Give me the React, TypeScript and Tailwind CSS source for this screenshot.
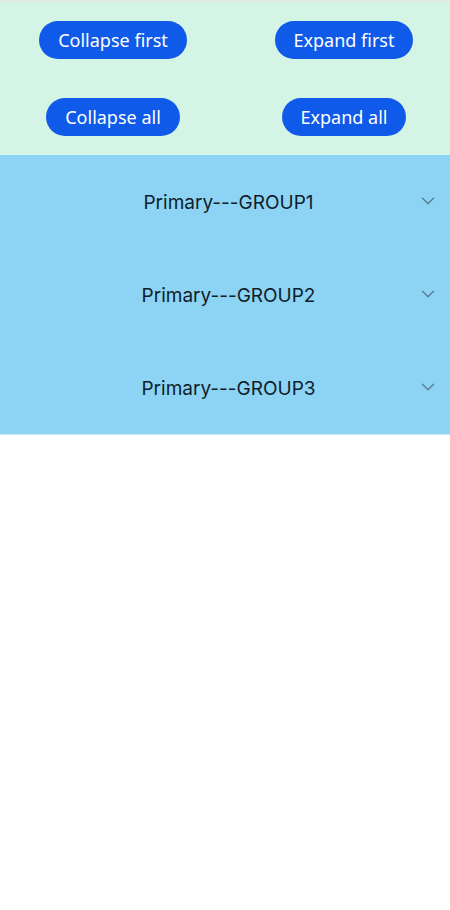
import { ChevronDown } from "lucide-react";

const groups = ["Primary---GROUP1", "Primary---GROUP2", "Primary---GROUP3"];

function PillButton({ label }: { label: string }) {
  return (
    <button className="h-[38px] px-[19px] rounded-full bg-[#0f5ae8] text-white text-[18px] leading-none">
      {label}
    </button>
  );
}

export default function App() {
  return (
    <div
      className="w-[450px] min-h-[910px] bg-white"
      style={{ fontFamily: '"Noto Sans", Roboto, sans-serif' }}
    >
      <div className="h-[2px] bg-[#e6e8e7]" />
      <div className="bg-[#d4f4e6] grid grid-cols-[226px_1fr] gap-x-3 gap-y-[39px] pt-[19px] pb-[19px]">
        <div className="flex justify-center">
          <PillButton label="Collapse first" />
        </div>
        <div className="flex justify-center">
          <PillButton label="Expand first" />
        </div>
        <div className="flex justify-center">
          <PillButton label="Collapse all" />
        </div>
        <div className="flex justify-center">
          <PillButton label="Expand all" />
        </div>
      </div>
      <div className="bg-[#8dd3f4]">
        {groups.map((g) => (
          <div key={g} className="relative h-[93px] flex items-center justify-center">
            <span className="font-['Inter',sans-serif] text-[19px] text-[#0f1e2b] pl-[7px] pt-[3px]">
              {g}
            </span>
            <ChevronDown
              className="absolute right-[11px] top-1/2 -translate-y-[55%] text-[#587c95]"
              size={22}
              strokeWidth={1.5}
            />
          </div>
        ))}
      </div>
      <div className="h-[1px] bg-[#c9ecfb]" />
    </div>
  );
}
